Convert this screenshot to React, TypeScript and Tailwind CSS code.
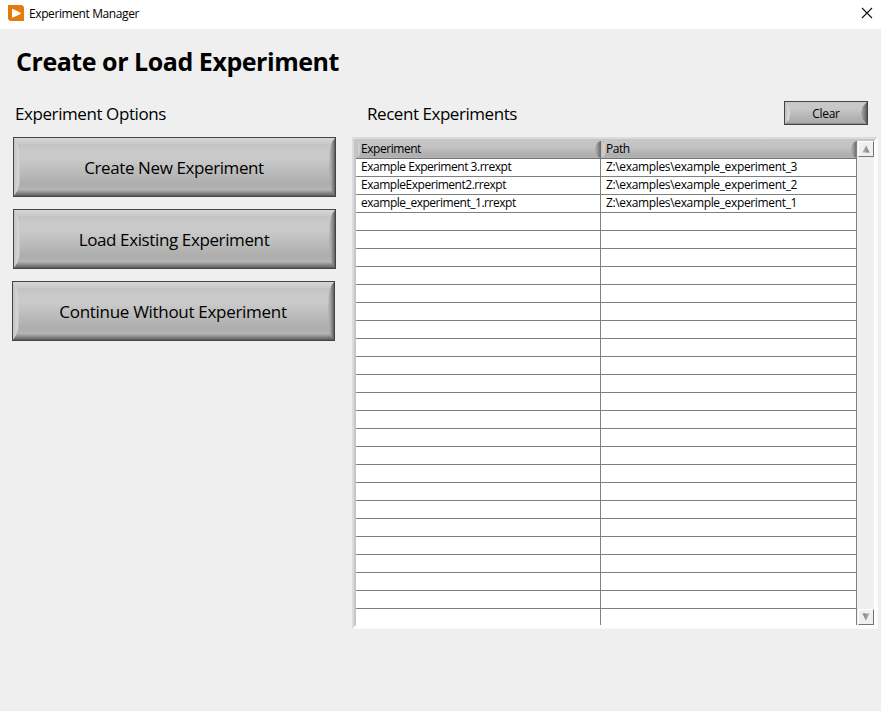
import type { ReactNode } from "react";

const recent = [
  ["Example Experiment 3.rrexpt", "Z:\\examples\\example_experiment_3"],
  ["ExampleExperiment2.rrexpt", "Z:\\examples\\example_experiment_2"],
  ["example_experiment_1.rrexpt", "Z:\\examples\\example_experiment_1"],
];
const rows = Array.from({ length: 26 }, (_, i) => recent[i] ?? ["", ""]);

function BigButton({ children, className = "" }: { children: ReactNode; className?: string }) {
  return (
    <button
      className={`relative flex h-[60px] w-[323px] items-center justify-center border border-[#444446] bg-[linear-gradient(#d6d6d6_0px,#cecece_4px,#c3c3c3_7px,#cbcbcb_15px,#c9c9c9_22px,#adadad_46px,#b4b4b4_52px,#a0a0a0_53px,#858585_55px,#6a6a6a_57px,#555_58px)] pr-[1px] text-[17px] leading-none ${className}`}
    >
      <span className="absolute inset-y-0 left-0 w-[6px] bg-[linear-gradient(90deg,#c4c4c4,#d4d4d4_70%,#cacaca)] [clip-path:polygon(0_0,50%_8%,90%_20%,100%_50%,90%_80%,50%_92%,0_100%)]" />
      <span className="absolute inset-y-0 right-0 w-[6px] bg-[linear-gradient(90deg,#b8b8b8,#a2a2a2_40%,#7c7c7c_75%,#5c5c5c)] [clip-path:polygon(100%_0,50%_7%,15%_20%,0_50%,15%_80%,50%_93%,100%_100%)]" />
      {children}
    </button>
  );
}

function HeaderCell({ label, className }: { label: string; className: string }) {
  return (
    <div
      className={`flex h-[17px] items-center justify-between bg-[linear-gradient(#c6c6c6,#c2c2c2_35%,#adadad_85%,#b6b6b6)] ${className}`}
    >
      <span className="h-full w-[5px] bg-[linear-gradient(90deg,#bdbdbd,#d2d2d2_60%,#bebebe)] [clip-path:polygon(0_0,70%_15%,100%_50%,70%_85%,0_100%)]" />
      <span className="flex-1 whitespace-pre pb-[2px] text-[12px] leading-[15px] tracking-[-0.45px]">{label}</span>
      <span className="h-full w-[5px] bg-[linear-gradient(90deg,#b0b0b0,#989898_50%,#707070)] [clip-path:polygon(100%_0,30%_15%,0_50%,30%_85%,100%_100%)]" />
    </div>
  );
}

function ScrollButton({ down = false }: { down?: boolean }) {
  return (
    <button className="flex h-4 w-4 items-center justify-center border border-b-[#737373] border-l-white border-r-[#737373] border-t-white bg-[#f0f0f0]">
      <svg width="8" height="8" viewBox="0 0 8 8" className={down ? "rotate-180" : ""}>
        <path d="M4 .5 7.5 7.5H.5Z" fill="#a6a6a6" />
        <path d="M4 .5 7.5 7.5H4Z" fill="#909090" />
      </svg>
    </button>
  );
}

export default function App() {
  return (
    <div className="flex h-[711px] w-[881px] flex-col overflow-hidden bg-[#efefef] font-['Open_Sans','Noto_Sans',sans-serif] text-black">
      <header className="flex h-[29px] items-center bg-white pl-2 pr-2">
        <svg width="16" height="16" viewBox="0 0 16 16" className="-mt-[3px]">
          <path d="M0 0H14L16 2V16H2L0 14Z" fill="#e57b0a" />
          <path d="M4 4.7Q4 3.7 5 4.1L12.5 7.7Q13.4 8.2 12.5 8.9L5 12.5Q4 12.9 4 11.9Z" fill="#fff" />
        </svg>
        <span className="-mt-px ml-[5px] flex-1 text-[12px] leading-4 tracking-[-0.4px]">Experiment Manager</span>
        <svg width="12" height="12" viewBox="0 0 12 12" className="-mt-[3px]">
          <path d="M1 1 11 11M11 1 1 11" stroke="#111" strokeWidth="1.1" />
        </svg>
      </header>
      <h1 className="ml-4 mt-[14px] h-9 text-[25px] font-bold leading-9 tracking-[-0.45px]">Create or Load Experiment</h1>
      <main className="flex pt-px">
        <section className="w-[352px] pl-3">
          <h2 className="ml-[3px] mt-[22px] h-6 text-[17px] leading-6 tracking-[-0.42px]">Experiment Options</h2>
          <div className="mt-[11px] flex flex-col gap-3">
            <BigButton className="ml-px tracking-[-0.4px]">Create New Experiment</BigButton>
            <BigButton className="ml-px tracking-[-0.38px]">Load Existing Experiment</BigButton>
            <BigButton className="tracking-[-0.3px]">Continue Without Experiment</BigButton>
          </div>
        </section>
        <section className="w-[526px]">
          <div className="flex h-[57px] items-start justify-between pl-[15px] pr-[10px]">
            <h2 className="mt-[22px] h-6 text-[17px] leading-6 tracking-[-0.45px]">Recent Experiments</h2>
            <button className="relative mt-[21px] flex h-[24px] w-[84px] items-center justify-center border border-[#444446] bg-[linear-gradient(#c9c9c9,#c7c7c7_30%,#adadad_85%,#b6b6b6_90%,#858585)] pt-[2px] text-[12px] leading-none tracking-[-0.3px]">
              <span className="absolute inset-y-0 left-0 w-[6px] bg-[linear-gradient(90deg,#bfbfbf,#d7d7d7_60%,#c3c3c3)] [clip-path:polygon(0_0,70%_20%,100%_50%,70%_80%,0_100%)]" />
              <span className="absolute inset-y-0 right-0 w-[6px] bg-[linear-gradient(90deg,#aaa,#888_50%,#5a5a5a)] [clip-path:polygon(100%_0,30%_20%,0_50%,30%_80%,100%_100%)]" />
              Clear
            </button>
          </div>
          <div className="h-[492px] w-[526px] border-2 border-b-[#fbfbfb] border-l-[#dbdbdb] border-r-[#fbfbfb] border-t-[#dbdbdb]">
            <div className="flex h-[488px] border-2 border-b-white border-l-[#c5c5c5] border-r-white border-t-[#c5c5c5]">
              <div className="w-[501px] border-r border-[#808080] bg-white">
                <div className="flex h-[18px] border-b border-[#747474]">
                  <HeaderCell label="Experiment" className="w-[245px] border-r border-[#707070]" />
                  <HeaderCell label="Path" className="w-[255px]" />
                </div>
                {rows.map(([name, path], i) => (
                  <div
                    key={i}
                    className="flex h-[18px] border-b border-[#808080] text-[12px] leading-[15px] last:h-[16px] last:border-b-0"
                  >
                    <span className="w-[245px] border-r border-[#808080] pl-[5px] tracking-[-0.47px]">{name}</span>
                    <span className="pl-[5px] tracking-[-0.35px]">{path}</span>
                  </div>
                ))}
              </div>
              <div className="flex w-[17px] flex-col justify-between bg-[#efefef] pl-px">
                <ScrollButton />
                <ScrollButton down />
              </div>
            </div>
          </div>
        </section>
      </main>
    </div>
  );
}
